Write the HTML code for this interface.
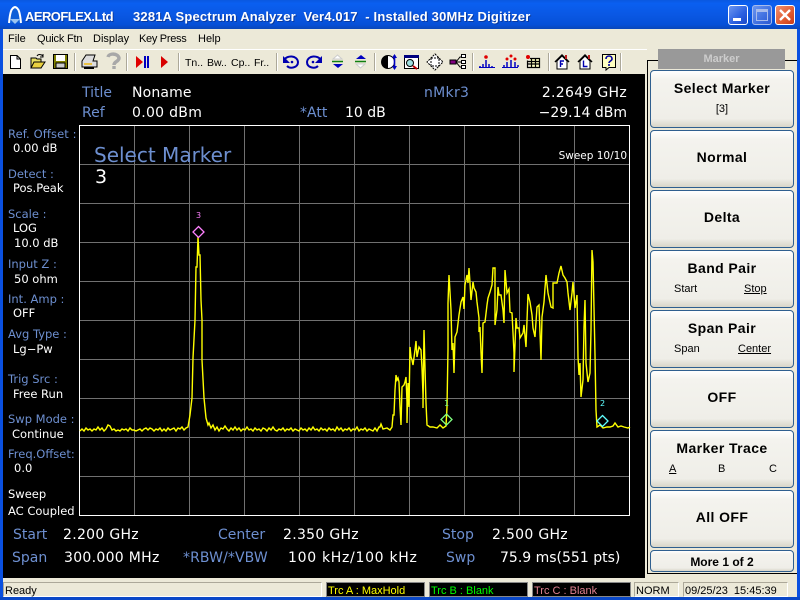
<!DOCTYPE html>
<html><head><meta charset="utf-8"><style>
html,body{margin:0;padding:0;width:800px;height:600px;overflow:hidden;background:#ece9d8}
*{box-sizing:border-box}
.t{position:absolute;white-space:nowrap;line-height:1}
.d{font-family:"DejaVu Sans",sans-serif;font-size:14px;color:#fff}
.b{color:#6d8fd0}
.l{font-family:"DejaVu Sans",sans-serif;font-size:11.5px}
.m{font:11px "Liberation Sans",sans-serif;color:#000;top:33px}
.k{position:absolute;left:650px;width:144px;height:58px;border:1px solid #2f5f8f;border-radius:4px;background:linear-gradient(#fff,#f4f3ee 15%,#efeee8 85%,#d8d5c8);text-align:center;color:#000}
.k span{position:absolute;white-space:nowrap;font:11px "Liberation Sans",sans-serif;top:32px}
.k span.h{left:0;right:0;top:9px;font:bold 14px "Liberation Sans",sans-serif;letter-spacing:.4px}
.k span.o{left:0;right:0;top:18px;font:bold 14px "Liberation Sans",sans-serif;letter-spacing:.4px}
.s{position:absolute;top:582px;height:15px;border:1px solid;border-color:#aca899 #fff #fff #aca899;font:11px "Liberation Sans",sans-serif;padding:2px 0 0 1px;white-space:nowrap;line-height:12px}
.c{background:#000;border-color:#888}
.sep{position:absolute;top:53px;width:2px;height:18px;border-left:1px solid #aca899;border-right:1px solid #fff}
</style></head><body>
<div style="position:absolute;left:0;top:0;width:800px;height:29px;background:linear-gradient(#0a58e0,#0a5ff0 12%,#0a58e4 50%,#0650d8 85%,#0a47b8)"></div>
<div style="position:absolute;left:0;top:29px;width:3px;height:571px;background:#0a50e0"></div>
<div style="position:absolute;left:797px;top:29px;width:3px;height:571px;background:#0a50e0"></div>
<div style="position:absolute;left:0;top:597px;width:800px;height:3px;background:#0a48c8"></div>

<svg style="position:absolute;left:5px;top:5px" width="20" height="20" viewBox="0 0 20 20"><path d="M4 18C5 8 6 3 10 2 14 3 15 8 16 18" fill="#1060d8" stroke="#fff" stroke-width="2"/><path d="M5 14H15L10 19Z" fill="#9cc4f0"/></svg>
<div class="t" style="left:25px;top:9px;font:bold 13px 'Liberation Sans',sans-serif;color:#fff;letter-spacing:-.55px;text-shadow:1px 1px #0a3aa0">AEROFLEX.Ltd</div>
<div class="t" style="left:133px;top:9px;font:bold 13px 'Liberation Sans',sans-serif;color:#fff;letter-spacing:.18px;text-shadow:1px 1px #0a3aa0;white-space:pre">3281A Spectrum Analyzer  Ver4.017  - Installed 30MHz Digitizer</div>

<div style="position:absolute;left:728px;top:5px;width:20px;height:20px;border:1px solid #fff;border-radius:3px;background:linear-gradient(135deg,#6c96f0,#2a5fe0 60%,#1a48c8)"><div style="position:absolute;left:4px;bottom:3px;width:8px;height:3px;background:#fff"></div></div>
<div style="position:absolute;left:752px;top:5px;width:20px;height:20px;border:1px solid #a8bcec;border-radius:3px;background:linear-gradient(135deg,#6c96f0,#3f6fe0 60%,#2a58d0)"><div style="position:absolute;left:3px;top:3px;width:12px;height:12px;border:1px solid #a8bcec;border-top-width:3px"></div></div>
<div style="position:absolute;left:775px;top:5px;width:20px;height:20px;border:1px solid #fff;border-radius:3px;background:linear-gradient(135deg,#f09070,#e05a30 60%,#c83c18)"><svg width="18" height="18" style="position:absolute;left:0;top:0"><path d="M4 4L14 14M14 4L4 14" stroke="#fff" stroke-width="2.4"/></svg></div>

<div class="t m" style="left:8px">File</div>
<div class="t m" style="left:37px;letter-spacing:-.2px">Quick Ftn</div>
<div class="t m" style="left:93px">Display</div>
<div class="t m" style="left:139px;letter-spacing:-.3px">Key Press</div>
<div class="t m" style="left:198px">Help</div>
<div style="position:absolute;left:3px;top:49px;width:644px;height:1px;background:#fff"></div>

<svg style="position:absolute;left:0;top:50px" width="640" height="24" viewBox="0 50 640 24">
<path d="M10.5 55.5H17L20.5 59V68.5H10.5Z" fill="#fff" stroke="#000"/><path d="M17 55.5V59H20.5" fill="none" stroke="#000"/>
<path d="M31 68V58H36L37 59H41V68Z" fill="#e8e060" stroke="#000"/><path d="M31 68L34 62H45L41 68Z" fill="#e8d040" stroke="#000"/><path d="M37 56C38 54 41 54 43 56M43 54V57H40" fill="none" stroke="#000"/>
<path d="M53.500 54.500H67.500V68.500H53.500Z" fill="#808000" stroke="#000"/><rect x="56" y="55" width="9" height="6" fill="#fff"/><rect x="56" y="63" width="9" height="5" fill="#ccc" stroke="#000"/>
<path d="M82 61L86 55H95L93 61H97V67H82Z" fill="#ddd" stroke="#000"/><path d="M84 64H92" stroke="#e8c040" stroke-width="2"/><path d="M84 68H94" stroke="#000" stroke-width="2"/>
<path d="M108 57C109 53 118 53 119 58 119 62 114 61 114 65M114 66V69" fill="none" stroke="#a8a8a8" stroke-width="3.400"/>
<path d="M136 56L143 62 136 68Z" fill="#e00000"/><path d="M144 56h2v12h-2zM147 56h2v12h-2z" fill="#0000c0"/>
<path d="M161 56L168 62 161 68Z" fill="#d80000"/>
<path d="M284 60C287 55 297 55 298 62 298 68 290 69 287 66" fill="none" stroke="#0000b0" stroke-width="2"/><path d="M283 56V63H290Z" fill="#0000b0"/><circle cx="292" cy="62" r="1.300" fill="#0000b0"/>
<path d="M321 60C318 55 308 55 307 62 307 68 315 69 318 66" fill="none" stroke="#0000b0" stroke-width="2"/><path d="M322 56V63H315Z" fill="#0000b0"/><circle cx="313" cy="62" r="1.300" fill="#0000b0"/>
<path d="M333 59H342L337.500 55Z" fill="#fff" stroke="#ccc"/><path d="M332 61.500H343" stroke="#108010" stroke-width="1.500"/><path d="M333 64H343L338 68Z" fill="#0000c0"/>
<path d="M356 59H366L361 55Z" fill="#0000c0"/><path d="M355 61.500H366" stroke="#108010" stroke-width="1.500"/><path d="M356 64H365L360.500 68Z" fill="#fff" stroke="#ccc"/>
<circle cx="388" cy="62" r="6.500" fill="#fff" stroke="#000"/><path d="M388 55.500A6.500 6.500 0 0 0 388 68.500Z" fill="#000"/><path d="M394.500 55V69" stroke="#0000c0" stroke-width="1.600"/><path d="M392 58L394.500 54 397 58ZM392 66L394.500 70 397 66Z" fill="#0000c0"/>
<rect x="404.500" y="55.500" width="14" height="13" fill="#fff" stroke="#000"/><rect x="404" y="55" width="15" height="3" fill="#000080"/><circle cx="410" cy="63" r="3.500" fill="#a0e0e0" stroke="#000"/><path d="M413 66L417 69" stroke="#c00000" stroke-width="2"/>
<path d="M435 54L439 58 443 62 439 66 435 70 431 66 427 62 431 58Z" fill="#fff" stroke="#000" stroke-dasharray="2 1"/><rect x="431" y="58" width="8" height="8" fill="#fff" stroke="#000" stroke-dasharray="2 1"/>
<rect x="450" y="60" width="6" height="4" fill="#800080" stroke="#000"/><path d="M456 62L460 57H461M456 62H461M456 62L460 67H461" fill="none" stroke="#000"/><rect x="461.500" y="54.500" width="4" height="3" fill="#fff" stroke="#000"/><rect x="461.500" y="60.500" width="4" height="3" fill="#fff" stroke="#000"/><rect x="461.500" y="65.500" width="4" height="3" fill="#fff" stroke="#000"/>
<circle cx="486" cy="57" r="1.800" fill="#e00000"/><path d="M486 60V67M483 64V67M489 64V67M480 66V67M492 66V67" stroke="#0000c0" stroke-width="1.500"/><path d="M479 67.500H495" stroke="#0000c0"/>
<circle cx="507" cy="59" r="1.500" fill="#e00000"/><circle cx="511" cy="56" r="1.500" fill="#e00000"/><circle cx="515" cy="59" r="1.500" fill="#e00000"/><path d="M507 62V67M511 60V67M515 62V67M504 65V67M518 65V67" stroke="#0000c0" stroke-width="1.500"/><path d="M502 67.500H518" stroke="#0000c0"/>
<circle cx="528" cy="57" r="2" fill="#e00000"/><rect x="530" y="58" width="10" height="10" fill="#ffffc0"/><path d="M527.500 60.500V67.500H539.500V58.500H530M527.500 64H539.500M531.500 58.500V67.500M535.500 58.500V67.500M527.500 61.500H539.500" fill="none" stroke="#000" stroke-width="1.200"/>
<path d="M555 62L562 55 569 62" fill="none" stroke="#000" stroke-width="1.500"/><path d="M557 61V69H567V61L562 56Z" fill="#fff" stroke="#000"/><path d="M566 55V59" stroke="#c02020" stroke-width="2"/><path d="M560.500 67V61H564M560.500 64H563" fill="none" stroke="#0000b0" stroke-width="1.400"/>
<path d="M578 62L585 55 592 62" fill="none" stroke="#000" stroke-width="1.500"/><path d="M580 61V69H590V61L585 56Z" fill="#fff" stroke="#000"/><path d="M589 55V59" stroke="#c02020" stroke-width="2"/><path d="M583.500 60.500V66.500H587.500" fill="none" stroke="#0000b0" stroke-width="1.400"/>
<path d="M602.500 54.500H615.500V67.500H609L606 70V67.500H602.500Z" fill="#ffffc0" stroke="#000"/><path d="M606 59C606 55 612 55 612 59 612 61 609 61 609 63M609 64V66" fill="none" stroke="#0000a0" stroke-width="1.600"/>
</svg>
<div class="sep" style="left:74px"></div><div class="sep" style="left:126px"></div><div class="sep" style="left:178px"></div><div class="sep" style="left:276px"></div><div class="sep" style="left:374px"></div><div class="sep" style="left:472px"></div><div class="sep" style="left:548px"></div><div class="sep" style="left:620px"></div>
<div class="t m" style="left:185px;top:57px;font-size:10.500px">Tn..</div>
<div class="t m" style="left:207px;top:57px;font-size:10.500px">Bw..</div>
<div class="t m" style="left:231px;top:57px;font-size:10.500px">Cp..</div>
<div class="t m" style="left:254px;top:57px;font-size:10.500px">Fr..</div>

<div style="position:absolute;left:3px;top:74px;width:642px;height:504px;background:#000"></div>

<div class="t d b" style="left:82px;top:86px">Title</div>
<div class="t d" style="left:132px;top:86px;letter-spacing:.15px">Noname</div>
<div class="t d b" style="left:82px;top:106px">Ref</div>
<div class="t d" style="left:132px;top:106px;letter-spacing:.3px">0.00 dBm</div>
<div class="t d b" style="left:300px;top:106px">*Att</div>
<div class="t d" style="left:345px;top:106px">10 dB</div>
<div class="t d b" style="left:424px;top:86px;letter-spacing:.3px">nMkr3</div>
<div class="t d" style="right:173px;top:86px;letter-spacing:.3px">2.2649 GHz</div>
<div class="t d" style="right:173px;top:106px">−29.14 dBm</div>

<div class="t l b" style="left:8px;top:129px;letter-spacing:.1px">Ref. Offset :</div><div class="t l" style="left:13px;top:143px;color:#fff">0.00 dB</div>
<div class="t l b" style="left:8px;top:169px">Detect :</div><div class="t l" style="left:13px;top:183px;color:#fff">Pos.Peak</div>
<div class="t l b" style="left:8px;top:209px">Scale :</div><div class="t l" style="left:13px;top:223px;color:#fff">LOG</div><div class="t l" style="left:14px;top:238px;color:#fff">10.0 dB</div>
<div class="t l b" style="left:8px;top:259px">Input Z :</div><div class="t l" style="left:14px;top:274px;color:#fff">50 ohm</div>
<div class="t l b" style="left:8px;top:294px">Int. Amp :</div><div class="t l" style="left:13px;top:308px;color:#fff">OFF</div>
<div class="t l b" style="left:8px;top:329px">Avg Type :</div><div class="t l" style="left:13px;top:344px;color:#fff">Lg−Pw</div>
<div class="t l b" style="left:8px;top:374px">Trig Src :</div><div class="t l" style="left:13px;top:389px;color:#fff">Free Run</div>
<div class="t l b" style="left:8px;top:414px">Swp Mode :</div><div class="t l" style="left:12px;top:429px;color:#fff">Continue</div>
<div class="t l b" style="left:8px;top:449px">Freq.Offset:</div><div class="t l" style="left:14px;top:463px;color:#fff">0.0</div>
<div class="t l" style="left:8px;top:489px;color:#fff">Sweep</div>
<div class="t l" style="left:8px;top:506px;color:#fff">AC Coupled</div>

<svg style="position:absolute;left:0;top:0" width="800" height="600" viewBox="0 0 800 600" shape-rendering="crispEdges">
<g stroke="#707070" stroke-width="1">
<path d="M134.500 125V515M189.500 125V515M244.500 125V515M299.500 125V515M354.500 125V515M409.500 125V515M464.500 125V515M519.500 125V515M574.500 125V515"/>
<path d="M80 164.500H630M80 203.500H630M80 242.500H630M80 281.500H630M80 320.500H630M80 359.500H630M80 398.500H630M80 437.500H630M80 476.500H630"/>
</g>
<rect x="79.500" y="125.500" width="550" height="390" fill="none" stroke="#fff"/>
</svg>
<svg style="position:absolute;left:0;top:0" width="800" height="600" viewBox="0 0 800 600">
<polyline fill="none" stroke="#ffff00" stroke-width="1.400" points="80,431 82,429 84,431 86,428 88,430 90,429 92,431 94,429 96,430 98,427 100,430 102,428 104,431 106,429 108,425 110,426 112,430 114,429 116,431 118,430 120,431 122,429 124,430 126,429 128,431 130,428 132,430 134,430 136,431 138,430 140,429 142,431 144,429 146,428 148,430 150,428 152,429 154,431 156,429 158,430 160,428 162,431 164,429 166,431 168,428 170,430 172,429 174,428 176,431 178,428 180,429 182,427 184,430 186,428 188,427 190,415 192,398 193,358 195,320 196,267 197,267 198,237 199,255 200,255 201,300 202,320 202,360 204,398 206,418 208,425 209,423 211,428 213,425 215,430 217,427 219,431 221,428 223,429 225,426 227,429 229,431 231,428 233,430 235,427 237,430 239,428 241,431 243,429 245,430 247,427 249,430 251,429 253,431 255,428 257,430 259,429 261,431 263,428 265,429 267,431 269,428 271,430 273,427 275,430 277,431 279,429 281,430 283,428 285,431 287,429 289,430 291,428 293,431 295,429 297,430 299,431 301,428 303,430 305,429 307,431 309,428 311,430 313,427 315,430 317,429 319,431 321,428 323,430 325,429 327,431 329,428 331,430 333,429 335,431 337,427 339,430 341,428 343,431 345,429 347,430 349,428 351,431 353,429 355,430 357,427 359,431 361,429 363,430 365,428 367,431 369,429 371,430 373,431 375,428 377,431 379,427 380,427 381,424 383,429 387,428 390,430 392,427 393,415 394,415 395,390 396,375 397,380 398,378 399,382 400,407 401,425 402,387 404,385 405,382 406,377 407,402 407,423 408,383 409,407 410,347 411,357 412,360 413,365 415,350 416,341 417,357 419,347 421,350 422,368 423,395 423,408 424,330 425,368 426,403 427,425 430,427 433,427 437,428 440,425 443,428 446,426 447,407 448,349 448,303 449,275 450,292 451,310 452,350 453,343 454,373 455,337 457,332 459,315 461,302 463,297 464,309 465,285 467,275 468,283 469,268 470,283 471,300 473,282 474,288 476,292 477,302 479,318 479,332 480,327 481,352 482,373 483,323 485,322 487,305 488,298 490,292 492,285 493,268 495,268 495,325 497,310 498,287 499,295 501,295 503,310 504,323 505,270 507,293 509,289 510,312 512,313 514,353 514,372 516,318 517,328 519,328 520,338 523,333 524,325 526,347 528,294 530,302 532,315 533,328 535,337 537,307 539,305 541,360 542,317 544,302 545,288 546,275 548,293 551,307 553,308 553,283 557,283 559,273 561,266 563,275 565,278 567,282 568,293 570,310 572,293 573,282 575,308 577,295 578,357 579,375 580,363 581,397 583,380 584,327 585,300 586,363 588,382 590,373 591,330 592,250 593,262 595,355 596,410 597,427 600,425 603,428 607,427 610,427 613,426 615,423 618,427 621,426 624,427 628,428 630,427"/>
<g fill="none" stroke-width="1.300">
<path d="M198.500 226.500L204 232 198.500 237.500 193 232Z" stroke="#ff80ff"/>
<path d="M446.500 414L452 419.500 446.500 425 441 419.500Z" stroke="#80ff80"/>
<path d="M602.500 415.500L608 421 602.500 426.500 597 421Z" stroke="#60ffff"/>
</g>
</svg>
<div class="t" style="left:196px;top:211px;font:8px 'DejaVu Sans',sans-serif;color:#ff80ff">3</div>
<div class="t" style="left:444px;top:399px;font:8px 'DejaVu Sans',sans-serif;color:#80ff80">1</div>
<div class="t" style="left:600px;top:399px;font:8px 'DejaVu Sans',sans-serif;color:#60ffff">2</div>

<div class="t" style="left:94px;top:143px;font:20px 'DejaVu Sans',sans-serif;color:#6d8fd0">Select Marker</div>
<div class="t" style="left:95px;top:166px;font:19px 'DejaVu Sans',sans-serif;color:#fff">3</div>
<div class="t" style="right:173px;top:150px;font:10.500px 'DejaVu Sans',sans-serif;color:#fff">Sweep 10/10</div>

<div class="t d b" style="left:13px;top:528px">Start</div><div class="t d" style="left:63px;top:528px;letter-spacing:.3px">2.200 GHz</div>
<div class="t d b" style="left:218px;top:528px">Center</div><div class="t d" style="left:283px;top:528px;letter-spacing:.3px">2.350 GHz</div>
<div class="t d b" style="left:442px;top:528px">Stop</div><div class="t d" style="left:492px;top:528px;letter-spacing:.3px">2.500 GHz</div>
<div class="t d b" style="left:12px;top:551px">Span</div><div class="t d" style="left:64px;top:551px;letter-spacing:.3px">300.000 MHz</div>
<div class="t d b" style="left:183px;top:551px;letter-spacing:.1px">*RBW/*VBW</div><div class="t d" style="left:288px;top:551px;letter-spacing:.7px">100 kHz/100 kHz</div>
<div class="t d b" style="left:446px;top:551px">Swp</div><div class="t d" style="left:500px;top:551px">75.9 ms(551 pts)</div>

<div style="position:absolute;left:647px;top:60px;width:150px;height:514px;border:1px solid #000;border-right:0;background:#ece9d8"></div>
<div style="position:absolute;left:658px;top:49px;width:127px;height:20px;background:#999;color:#ccc;font:bold 11px 'Liberation Sans',sans-serif;text-align:center;line-height:21px">Marker</div>

<div class="k" style="top:70px"><span class="h">Select Marker</span><span style="left:0;right:0">[3]</span></div>
<div class="k" style="top:130px"><span class="o">Normal</span></div>
<div class="k" style="top:190px"><span class="o">Delta</span></div>
<div class="k" style="top:250px"><span class="h">Band Pair</span><span style="left:23px">Start</span><span style="left:93px;text-decoration:underline">Stop</span></div>
<div class="k" style="top:310px"><span class="h">Span Pair</span><span style="left:23px">Span</span><span style="left:87px;text-decoration:underline">Center</span></div>
<div class="k" style="top:370px"><span class="o">OFF</span></div>
<div class="k" style="top:430px"><span class="h">Marker Trace</span><span style="left:18px;text-decoration:underline">A</span><span style="left:67px">B</span><span style="left:118px">C</span></div>
<div class="k" style="top:490px"><span class="o">All OFF</span></div>
<div class="k" style="top:550px;height:22px"><span style="left:0;right:0;top:4px;font:bold 12px 'Liberation Sans',sans-serif">More 1 of 2</span></div>

<div class="s" style="left:3px;width:319px;color:#000">Ready</div>
<div class="s c" style="left:326px;width:99px;color:#ffff00">Trc A : MaxHold</div>
<div class="s c" style="left:429px;width:99px;color:#00ff00">Trc B : Blank</div>
<div class="s c" style="left:532px;width:99px;color:#e08090">Trc C : Blank</div>
<div class="s" style="left:634px;width:45px;color:#000">NORM</div>
<div class="s" style="left:683px;width:105px;color:#000;white-space:pre">09/25/23  15:45:39</div>
</body></html>
